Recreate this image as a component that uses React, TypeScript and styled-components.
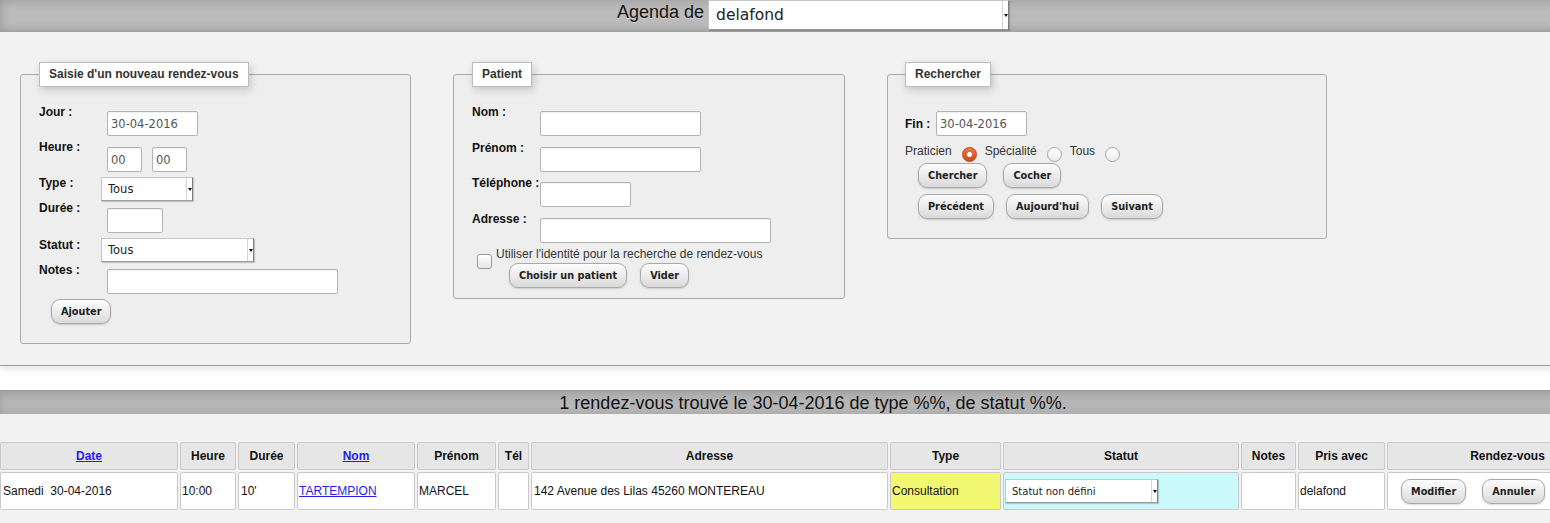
import React from 'react';
import styled, { createGlobalStyle } from 'styled-components';

const GlobalStyle = createGlobalStyle`
  html, body { margin: 0; padding: 0; background: #ffffff; overflow: hidden; }
  body { font-family: "Liberation Sans", Arial, sans-serif; font-size: 12px; color: #111; }
  * { box-sizing: border-box; }
`;

const Page = styled.div`
  width: 1626px;
  min-height: 523px;
  display: flex;
  flex-direction: column;
`;

const TopBar = styled.header`
  height: 32px;
  background: #bbbbbb;
  box-shadow: inset 0 0 12px rgba(0, 0, 0, 0.2);
  display: flex;
  justify-content: center;
  align-items: flex-start;
  gap: 4px;
`;

const BarTitle = styled.span`
  font-size: 18px;
  line-height: 21px;
  padding-top: 2px;
  color: #111;
  text-shadow: 0 1px 0 rgba(255, 255, 255, 0.35);
`;

const SelectBox = styled.span<{ $w: number; $h: number }>`
  display: inline-flex;
  flex: none;
  width: ${(p) => p.$w}px;
  height: ${(p) => p.$h}px;
  background: #fff;
  border: 1px solid #c6c6c6;
  border-right-color: #7f7f7f;
  border-bottom-color: #9c9c9c;
  box-shadow: 1px 1px 1px rgba(0, 0, 0, 0.18);
`;

const NativeSelect = styled.select<{ $fs: number; $pl: number }>`
  appearance: none;
  -webkit-appearance: none;
  border: 0;
  outline: none;
  background: transparent;
  flex: 1;
  min-width: 0;
  height: 100%;
  margin: 0;
  padding: 0 0 0 ${(p) => p.$pl}px;
  font-family: "DejaVu Sans", sans-serif;
  font-size: ${(p) => p.$fs}px;
  color: #222;
`;

const SelectArrow = styled.span`
  flex: none;
  width: 6px;
  border-left: 1px solid #d6d6d6;
  display: flex;
  align-items: center;
  justify-content: center;
  &::after {
    content: '';
    border-left: 2px solid transparent;
    border-right: 2px solid transparent;
    border-top: 3px solid #111;
  }
`;

const FormPanel = styled.section`
  display: flex;
  align-items: flex-start;
  gap: 42px;
  padding: 30px 20px 21px;
  background: #f2f2f2;
  border-bottom: 1px solid #9a9a9a;
  box-shadow: 0 2px 8px rgba(0, 0, 0, 0.12);
`;

const Fieldset = styled.fieldset<{ $w: number; $pad: string }>`
  width: ${(p) => p.$w}px;
  min-width: 0;
  margin: 0;
  padding: ${(p) => p.$pad};
  border: 1px solid #ababab;
  border-radius: 3px;
  background: #eeeeee;
`;

const Legend = styled.legend`
  padding: 4px 9px;
  background: #fff;
  border: 1px solid #bdbdbd;
  font-weight: bold;
  font-size: 12px;
  line-height: 15px;
  color: #333;
  box-shadow: 2px 3px 8px rgba(0, 0, 0, 0.18);
`;

const FormRow = styled.div<{ $h: number }>`
  display: flex;
  align-items: flex-start;
  height: ${(p) => p.$h}px;
`;

const RowLabel = styled.label<{ $w: number }>`
  flex: none;
  width: ${(p) => p.$w}px;
  font-weight: bold;
  font-size: 12px;
  line-height: 14px;
  color: #111;
`;

const Controls = styled.div<{ $mt: number; $ml?: number }>`
  display: flex;
  gap: 10px;
  margin-top: ${(p) => p.$mt}px;
  margin-left: ${(p) => p.$ml ?? 0}px;
`;

const TextInput = styled.input<{ $w: number }>`
  width: ${(p) => p.$w}px;
  height: 25px;
  margin: 0;
  padding: 0 3px;
  border: 1px solid #b3b3b3;
  border-radius: 2px;
  background: #fff;
  box-shadow: inset 0 1px 1px rgba(0, 0, 0, 0.06);
  font-family: "DejaVu Sans", sans-serif;
  font-size: 11.5px;
  color: #555;
  outline: none;
`;

const ButtonRow = styled.div<{ $gap: number; $mt?: number; $ml?: number }>`
  display: flex;
  gap: ${(p) => p.$gap}px;
  margin-top: ${(p) => p.$mt ?? 0}px;
  margin-left: ${(p) => p.$ml ?? 0}px;
`;

const Button = styled.button`
  height: 25px;
  margin: 0;
  padding: 0 9px;
  border: 1px solid #a9a9a9;
  border-radius: 9px;
  background: linear-gradient(#fdfdfd, #dadada);
  box-shadow: 0 1px 2px rgba(0, 0, 0, 0.15);
  font-family: "DejaVu Sans Condensed", "DejaVu Sans", sans-serif;
  font-weight: bold;
  font-size: 10.8px;
  color: #222;
  white-space: nowrap;
`;

const CheckRow = styled.div`
  display: flex;
  align-items: flex-start;
  margin-top: 4px;
`;

const Checkbox = styled.input`
  appearance: none;
  -webkit-appearance: none;
  flex: none;
  width: 15px;
  height: 15px;
  margin: 7px 4px 0 5px;
  border: 1px solid #9a9a9a;
  border-radius: 3px;
  background: linear-gradient(#ffffff, #e6e6e6);
`;

const CheckBody = styled.div`
  display: flex;
  flex-direction: column;
`;

const PlainText = styled.label`
  font-size: 12px;
  line-height: 14px;
  color: #333;
  white-space: nowrap;
`;

const FinRow = styled.div`
  display: flex;
  align-items: center;
  margin-top: 6px;
`;

const RadioRow = styled.div`
  display: flex;
  align-items: flex-start;
  height: 19px;
  margin-top: 8px;
`;

const Radio = styled.input`
  appearance: none;
  -webkit-appearance: none;
  flex: none;
  width: 15px;
  height: 15px;
  margin: 3px 8px 0 10px;
  border-radius: 50%;
  border: 1px solid #a6a6a6;
  background: linear-gradient(#ffffff, #ececec);
  &:checked {
    border-color: #b2461a;
    background: radial-gradient(circle, #ffffff 0 2.2px, transparent 2.8px),
      linear-gradient(#ef7a44, #cf4718);
  }
`;

const ResultsBar = styled.div`
  margin-top: 24px;
  height: 24px;
  border-top: 1px solid #9c9c9c;
  background: #b6b6b6;
  box-shadow: inset 0 2px 8px rgba(0, 0, 0, 0.15);
  text-align: center;
  font-size: 18px;
  line-height: 25px;
  color: #111;
  white-space: nowrap;
`;

const Results = styled.section`
  flex: 1;
  background: #f2f2f2;
  padding-top: 26px;
`;

const Table = styled.table`
  border-collapse: separate;
  border-spacing: 2px;
  table-layout: fixed;
  width: 1632px;
  margin-left: -2px;
`;

const Th = styled.th<{ $w: number }>`
  width: ${(p) => p.$w}px;
  height: 28px;
  padding: 0 2px;
  background: #e6e6e6;
  border: 1px solid #c9c9c9;
  border-radius: 2px;
  font-weight: bold;
  font-size: 12px;
  text-align: center;
  color: #111;
  white-space: nowrap;
`;

const Td = styled.td<{ $bg?: string; $pl?: number }>`
  height: 38px;
  padding: 0 1px 0 ${(p) => p.$pl ?? 1}px;
  background: ${(p) => p.$bg ?? '#ffffff'};
  border: 1px solid #c9c9c9;
  border-radius: 2px;
  font-size: 12px;
  color: #111;
  white-space: nowrap;
  overflow: hidden;
`;

const Link = styled.a`
  color: #1f1fe8;
  text-decoration: underline;
`;

type SelectProps = { w: number; h: number; fs: number; pl: number; value: string };
const Select = ({ w, h, fs, pl, value }: SelectProps) => (
  <SelectBox $w={w} $h={h}>
    <NativeSelect $fs={fs} $pl={pl} defaultValue={value}>
      <option>{value}</option>
    </NativeSelect>
    <SelectArrow />
  </SelectBox>
);

type Col = { label: string; w: number; link?: boolean };
const columns: Col[] = [
  { label: 'Date', w: 178, link: true },
  { label: 'Heure', w: 56 },
  { label: 'Durée', w: 57 },
  { label: 'Nom', w: 118, link: true },
  { label: 'Prénom', w: 79 },
  { label: 'Tél', w: 31 },
  { label: 'Adresse', w: 357 },
  { label: 'Type', w: 111 },
  { label: 'Statut', w: 236 },
  { label: 'Notes', w: 55 },
  { label: 'Pris avec', w: 87 },
  { label: 'Rendez-vous', w: 241 },
];

export default function App() {
  return (
    <Page>
      <GlobalStyle />
      <TopBar>
        <BarTitle>Agenda de</BarTitle>
        <Select w={301} h={30} fs={15.5} pl={7} value="delafond" />
      </TopBar>

      <FormPanel>
        <Fieldset $w={391} $pad="18px 18px 19px">
          <Legend>Saisie d'un nouveau rendez-vous</Legend>
          <FormRow $h={35}>
            <RowLabel $w={68}>Jour :</RowLabel>
            <Controls $mt={6}>
              <TextInput $w={91} defaultValue="30-04-2016" />
            </Controls>
          </FormRow>
          <FormRow $h={36}>
            <RowLabel $w={68}>Heure :</RowLabel>
            <Controls $mt={7}>
              <TextInput $w={35} defaultValue="00" />
              <TextInput $w={35} defaultValue="00" />
            </Controls>
          </FormRow>
          <FormRow $h={25}>
            <RowLabel $w={68}>Type :</RowLabel>
            <Controls $mt={1} $ml={-6}>
              <Select w={92} h={24} fs={11.5} pl={6} value="Tous" />
            </Controls>
          </FormRow>
          <FormRow $h={37}>
            <RowLabel $w={68}>Durée :</RowLabel>
            <Controls $mt={7}>
              <TextInput $w={56} />
            </Controls>
          </FormRow>
          <FormRow $h={25}>
            <RowLabel $w={68}>Statut :</RowLabel>
            <Controls $mt={0} $ml={-6}>
              <Select w={153} h={24} fs={11.5} pl={6} value="Tous" />
            </Controls>
          </FormRow>
          <FormRow $h={30}>
            <RowLabel $w={68}>Notes :</RowLabel>
            <Controls $mt={6}>
              <TextInput $w={231} />
            </Controls>
          </FormRow>
          <ButtonRow $gap={10} $mt={6} $ml={12}>
            <Button>Ajouter</Button>
          </ButtonRow>
        </Fieldset>

        <Fieldset $w={392} $pad="18px 18px 10px">
          <Legend>Patient</Legend>
          <FormRow $h={36}>
            <RowLabel $w={68}>Nom :</RowLabel>
            <Controls $mt={6}>
              <TextInput $w={161} />
            </Controls>
          </FormRow>
          <FormRow $h={35}>
            <RowLabel $w={68}>Prénom :</RowLabel>
            <Controls $mt={6}>
              <TextInput $w={161} />
            </Controls>
          </FormRow>
          <FormRow $h={36}>
            <RowLabel $w={68}>Téléphone :</RowLabel>
            <Controls $mt={6}>
              <TextInput $w={91} />
            </Controls>
          </FormRow>
          <FormRow $h={31}>
            <RowLabel $w={68}>Adresse :</RowLabel>
            <Controls $mt={6}>
              <TextInput $w={231} />
            </Controls>
          </FormRow>
          <CheckRow>
            <Checkbox type="checkbox" id="use-identity" />
            <CheckBody>
              <PlainText htmlFor="use-identity">Utiliser l'identité pour la recherche de rendez-vous</PlainText>
              <ButtonRow $gap={13} $mt={2} $ml={13}>
                <Button>Choisir un patient</Button>
                <Button>Vider</Button>
              </ButtonRow>
            </CheckBody>
          </CheckRow>
        </Fieldset>

        <Fieldset $w={440} $pad="18px 17px 19px">
          <Legend>Rechercher</Legend>
          <FinRow>
            <RowLabel $w={31}>Fin :</RowLabel>
            <TextInput $w={91} defaultValue="30-04-2016" />
          </FinRow>
          <RadioRow>
            <PlainText>Praticien</PlainText>
            <Radio type="radio" name="scope" defaultChecked />
            <PlainText>Spécialité</PlainText>
            <Radio type="radio" name="scope" />
            <PlainText>Tous</PlainText>
            <Radio type="radio" name="scope" />
          </RadioRow>
          <ButtonRow $gap={16} $ml={13}>
            <Button>Chercher</Button>
            <Button>Cocher</Button>
          </ButtonRow>
          <ButtonRow $gap={12} $mt={6} $ml={13}>
            <Button>Précédent</Button>
            <Button>Aujourd'hui</Button>
            <Button>Suivant</Button>
          </ButtonRow>
        </Fieldset>
      </FormPanel>

      <ResultsBar>1 rendez-vous trouvé le 30-04-2016 de type %%, de statut %%.</ResultsBar>

      <Results>
        <Table>
          <thead>
            <tr>
              {columns.map((c) => (
                <Th key={c.label} $w={c.w}>
                  {c.link ? <Link href="#">{c.label}</Link> : c.label}
                </Th>
              ))}
            </tr>
          </thead>
          <tbody>
            <tr>
              <Td $pl={2}>Samedi&nbsp; 30-04-2016</Td>
              <Td>10:00</Td>
              <Td $pl={2}>10'</Td>
              <Td>
                <Link href="#">TARTEMPION</Link>
              </Td>
              <Td>MARCEL</Td>
              <Td />
              <Td $pl={2}>142 Avenue des Lilas 45260 MONTEREAU</Td>
              <Td $bg="#f3f872">Consultation</Td>
              <Td $bg="#ccf9fb">
                <Select w={153} h={24} fs={10} pl={6} value="Statut non défini" />
              </Td>
              <Td />
              <Td>delafond</Td>
              <Td $pl={13}>
                <ButtonRow $gap={16}>
                  <Button>Modifier</Button>
                  <Button>Annuler</Button>
                </ButtonRow>
              </Td>
            </tr>
          </tbody>
        </Table>
      </Results>
    </Page>
  );
}
